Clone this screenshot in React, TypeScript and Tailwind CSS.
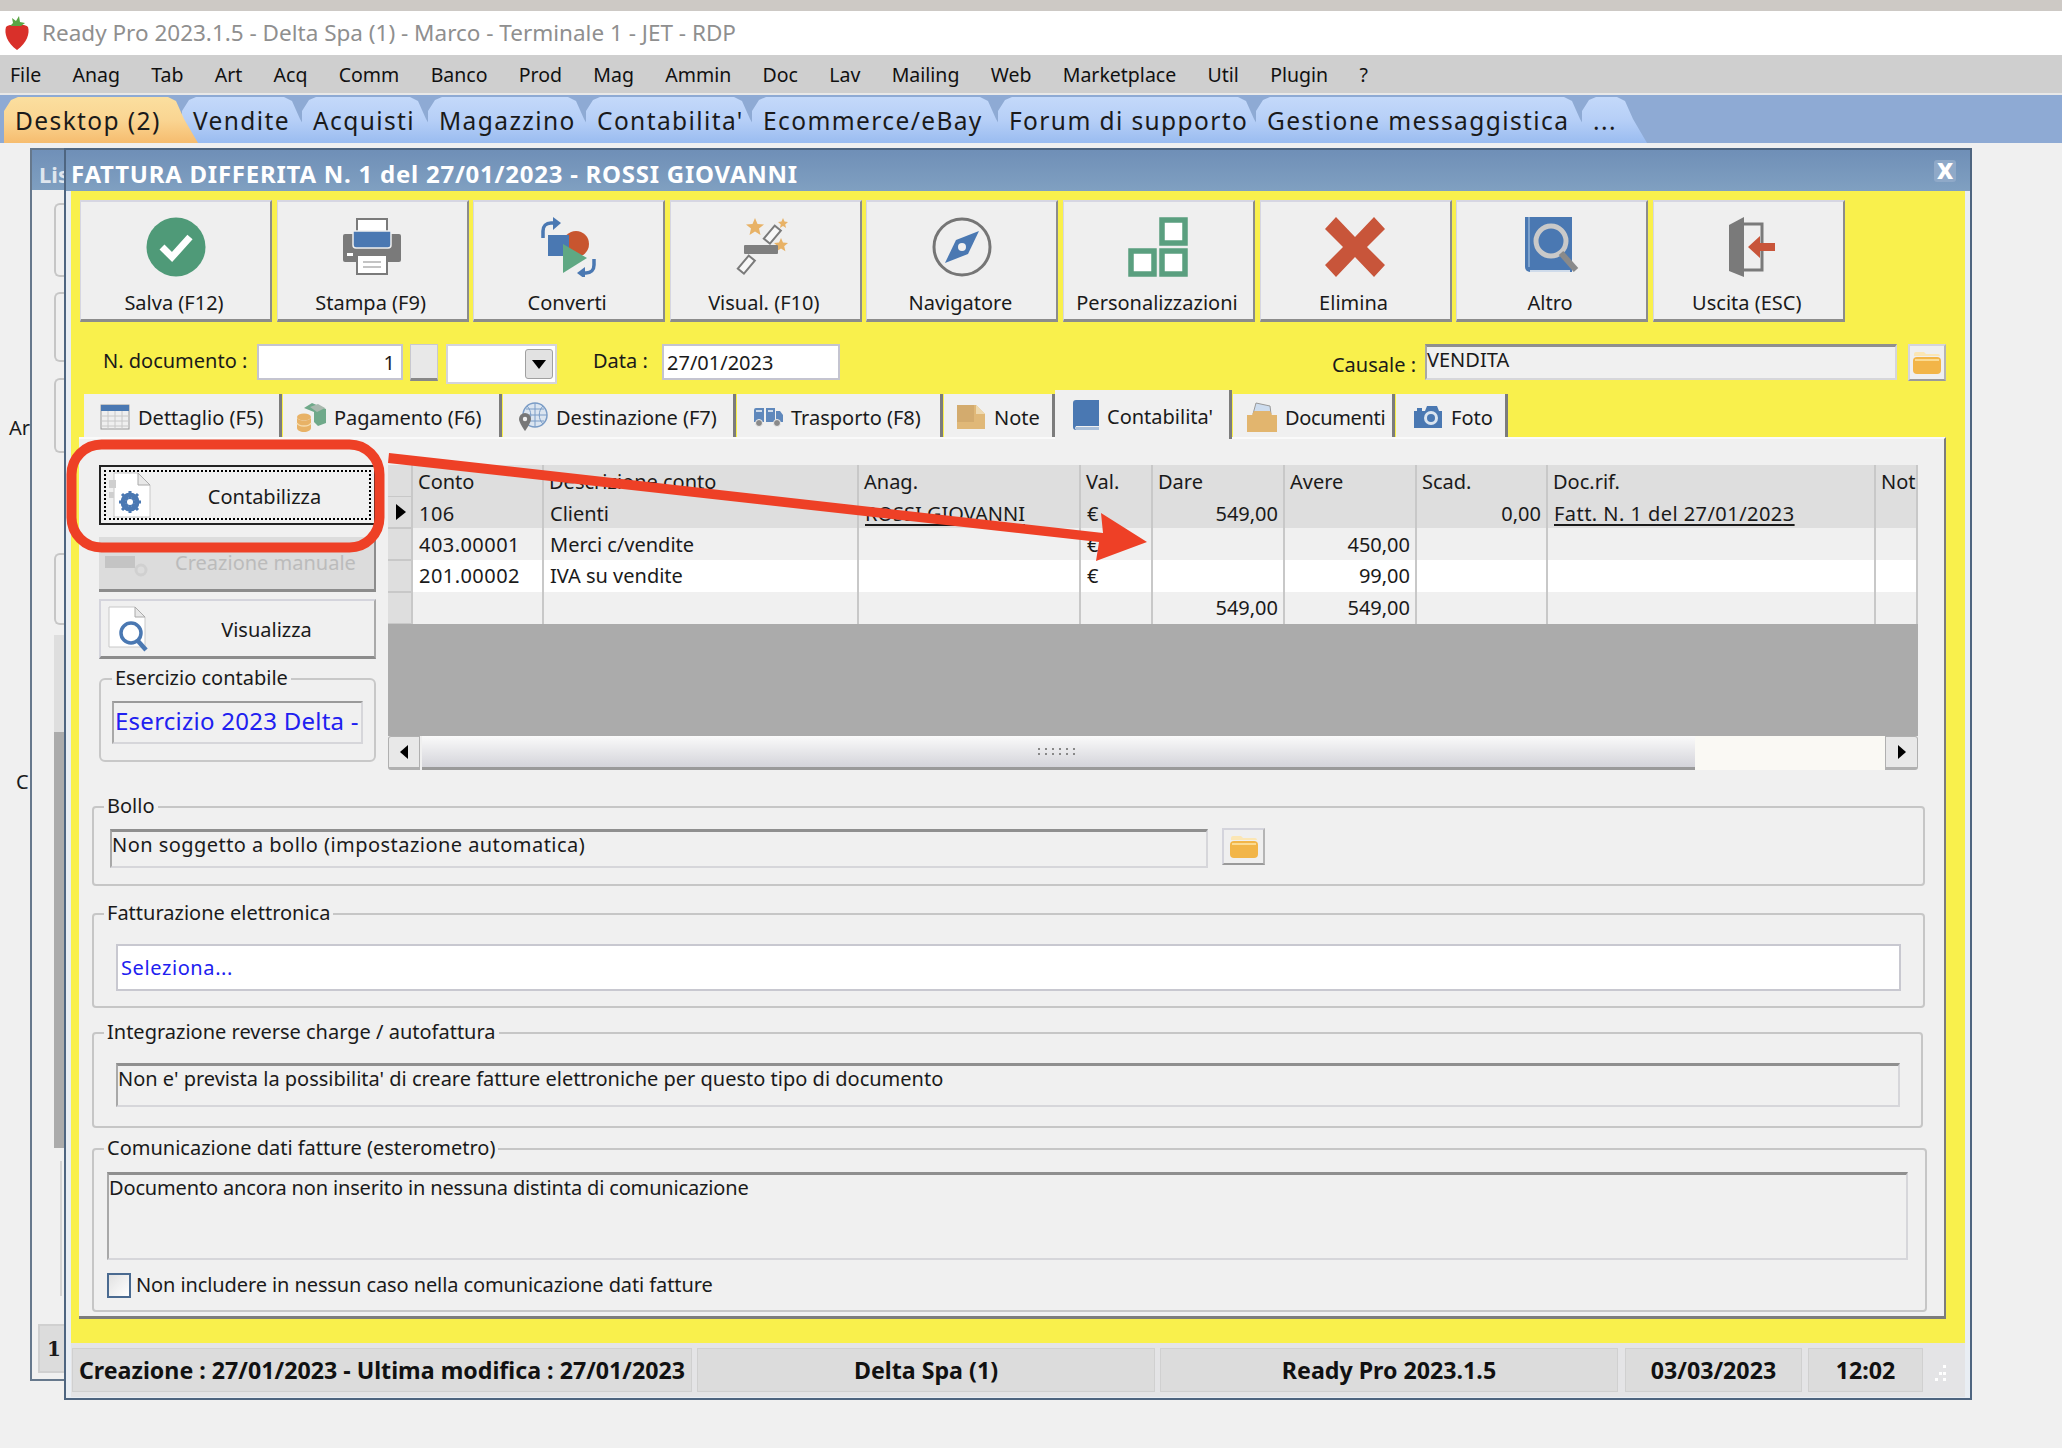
import React from 'react';

const topTabs = [
  { label: 'Desktop (2)', cls: 'w-[194px]', active: true },
  { label: 'Vendite', cls: 'w-[132px] -ml-[16px]' },
  { label: 'Acquisti', cls: 'w-[138px] -ml-[12px]' },
  { label: 'Magazzino', cls: 'w-[170px] -ml-[12px]' },
  { label: "Contabilita'", cls: 'w-[178px] -ml-[12px]' },
  { label: 'Ecommerce/eBay', cls: 'w-[258px] -ml-[12px]' },
  { label: 'Forum di supporto', cls: 'w-[270px] -ml-[12px]' },
  { label: 'Gestione messaggistica', cls: 'w-[338px] -ml-[12px]' },
  { label: '...', cls: 'w-[65px] -ml-[12px]' },
];

const menu = ['File', 'Anag', 'Tab', 'Art', 'Acq', 'Comm', 'Banco', 'Prod', 'Mag', 'Ammin', 'Doc', 'Lav', 'Mailing', 'Web', 'Marketplace', 'Util', 'Plugin', '?'];

/* ---------- toolbar icons ---------- */
const CheckIcon = () => (
  <svg width="60" height="60" viewBox="0 0 60 60">
    <circle cx="30" cy="30" r="29.5" fill="#4f9a78" />
    <path d="M16 30l10 10 18-20" fill="none" stroke="#fff" strokeWidth="7" />
  </svg>
);
const PrinterIcon = () => (
  <svg width="60" height="60" viewBox="0 0 60 60">
    <rect x="15" y="2" width="30" height="16" fill="#fff" stroke="#7a7a7a" strokeWidth="2" />
    <path d="M3 17h54a2 2 0 0 1 2 2v24a2 2 0 0 1-2 2H3a2 2 0 0 1-2-2V19a2 2 0 0 1 2-2z" fill="#7a7a7a" />
    <path d="M11 14h38v14a3 3 0 0 1-3 3H14a3 3 0 0 1-3-3z" fill="#4a78b2" stroke="#f0f0f0" strokeWidth="1.5" />
    <rect x="15" y="38" width="30" height="19" fill="#fff" stroke="#7a7a7a" strokeWidth="2" />
    <path d="M21 45h18M21 50h18" stroke="#c4c4c4" strokeWidth="2" />
    <rect x="5" y="36" width="6" height="3" fill="#fff" />
  </svg>
);
const ConvertIcon = () => (
  <svg width="62" height="60" viewBox="0 0 62 60">
    <path d="M5 21v-7c0-5 3-8 8-8h4" fill="none" stroke="#4a78b2" strokeWidth="3.5" />
    <path d="M15 0l8 6-8 7z" fill="#4a78b2" />
    <circle cx="38" cy="27" r="13" fill="#c8552f" />
    <rect x="10" y="18" width="21" height="21" fill="#4a78b2" />
    <path d="M25 27l24 14-24 15z" fill="#5fa883" />
    <path d="M56 42v6c0 5-3 8-8 8h-3" fill="none" stroke="#4a78b2" strokeWidth="3.5" />
    <path d="M47 50l-8 6 8 6z" fill="#4a78b2" />
  </svg>
);
const WandIcon = () => (
  <svg width="60" height="60" viewBox="0 0 60 60">
    <path d="M20 1l2.500 6 6.500.5-5 4 1.500 6.500-5.500-3.500-5.500 3.500 1.500-6.500-5-4 6.500-.5z" fill="#e8b266" />
    <path d="M48 1l1.500 3.500 3.500.5-2.800 2.400.9 3.600-3.100-2-3.100 2 .9-3.600L43 5l3.500-.5z" fill="#e8b266" />
    <path d="M46 21l2 4.500 5 .5-3.800 3.200 1.200 5-4.400-2.700-4.400 2.700 1.200-5L39 26l5-.5z" fill="#e8b266" />
    <rect x="29" y="14" width="17" height="8" transform="rotate(-50 37 18)" fill="#f7f7f7" stroke="#7a7a7a" strokeWidth="2" />
    <rect x="9" y="28" width="34" height="9" rx="1" fill="#7f7f7f" />
    <rect x="3" y="44" width="17" height="8" transform="rotate(-50 11 48)" fill="#f7f7f7" stroke="#7a7a7a" strokeWidth="2" />
  </svg>
);
const CompassIcon = () => (
  <svg width="60" height="60" viewBox="0 0 60 60">
    <circle cx="30" cy="30" r="28" fill="none" stroke="#757575" strokeWidth="3" />
    <path d="M47 14L36 37 13 46l11-23z" fill="#4a78b2" />
    <circle cx="30" cy="30" r="4" fill="#f0f0f0" />
  </svg>
);
const BlocksIcon = () => (
  <svg width="60" height="60" viewBox="0 0 60 60">
    <g fill="#fff" stroke="#5a9f7f" strokeWidth="5.5">
      <rect x="34" y="3" width="23" height="23" />
      <rect x="3" y="34" width="23" height="23" />
      <rect x="34" y="34" width="23" height="23" />
    </g>
  </svg>
);
const CrossIcon = () => (
  <svg width="60" height="60" viewBox="0 0 60 60">
    <path d="M11 0l19 20L49 0l11 12-18 18 18 18-11 12-19-20-19 20L0 48l18-18L0 12z" fill="#c8553a" />
  </svg>
);
const BookSearchIcon = () => (
  <svg width="60" height="60" viewBox="0 0 60 60">
    <path d="M3 0h47v55H8a5 5 0 0 1-5-5z" fill="#4a78b2" />
    <path d="M7 0v50" stroke="#8fb0d6" strokeWidth="1.5" />
    <circle cx="29" cy="24" r="15" fill="#4a78b2" stroke="#c9c9c9" strokeWidth="5" />
    <path d="M39 36l15 17" stroke="#8a8a8a" strokeWidth="6" />
    <path d="M8 54h40" stroke="#cfdbea" strokeWidth="2" />
  </svg>
);
const ExitIcon = () => (
  <svg width="60" height="60" viewBox="0 0 60 60">
    <path d="M22 7h22v46H22" fill="none" stroke="#7a7a7a" strokeWidth="3" />
    <path d="M11 8L26 0v60L11 54z" fill="#7a7a7a" />
    <path d="M30 30l12-11v7h15v8H42v7z" fill="#c8553a" />
  </svg>
);

const toolbar = [
  { label: 'Salva (F12)', icon: <CheckIcon /> },
  { label: 'Stampa (F9)', icon: <PrinterIcon /> },
  { label: 'Converti', icon: <ConvertIcon /> },
  { label: 'Visual. (F10)', icon: <WandIcon /> },
  { label: 'Navigatore', icon: <CompassIcon /> },
  { label: 'Personalizzazioni', icon: <BlocksIcon /> },
  { label: 'Elimina', icon: <CrossIcon /> },
  { label: 'Altro', icon: <BookSearchIcon /> },
  { label: 'Uscita (ESC)', icon: <ExitIcon /> },
];

/* ---------- document tab icons ---------- */
const TableIcon = () => (
  <svg width="30" height="26" viewBox="0 0 30 26">
    <rect x="1" y="1" width="28" height="24" fill="#efefef" stroke="#9a9a9a" />
    <rect x="1" y="1" width="28" height="6" fill="#4a78b2" />
    <path d="M1 12h28M1 17h28M1 22h28M8 7v18M15 7v18M22 7v18" stroke="#c8c8c8" />
  </svg>
);
const MoneyIcon = () => (
  <svg width="30" height="30" viewBox="0 0 30 30">
    <path d="M8 6l8-5 14 6v14l-8 3-4-4V10z" fill="#6fa98a" />
    <path d="M14 5l8-3 7 4-8 4z" fill="#a8b8ae" />
    <ellipse cx="8" cy="15" rx="7" ry="3.5" fill="#e8b266" />
    <path d="M1 15v11c0 2 3 4 7 4s7-2 7-4V15c0 2-3 3.500-7 3.500S1 17 1 15z" fill="#e8b266" />
    <path d="M1 21c1 2 4 3 7 3s6-1 7-3" fill="none" stroke="#f5dcae" strokeWidth="1.5" />
  </svg>
);
const GlobeIcon = () => (
  <svg width="30" height="30" viewBox="0 0 30 30">
    <circle cx="17" cy="13" r="12" fill="#dbe5f0" stroke="#7a9cc6" strokeWidth="1.5" />
    <path d="M5 13h24M17 1v24M9 4c5 5 5 13 0 18M25 4c-5 5-5 13 0 18M8 7h18M8 19h18" fill="none" stroke="#7a9cc6" />
    <path d="M7 11a6 6 0 0 1 6 6c0 4-6 12-6 12S1 21 1 17a6 6 0 0 1 6-6z" fill="#777" />
    <circle cx="7" cy="17" r="2.2" fill="#efefef" />
  </svg>
);
const TruckIcon = () => (
  <svg width="30" height="20" viewBox="0 0 30 20">
    <path d="M1 3a2 2 0 0 1 2-2h8v14H1zM13 1h9v14h-9zM23 4h4l3 4v7h-7z" fill="#5f88bc" />
    <path d="M3 4h6M15 4h5" stroke="#cfdbea" strokeWidth="2" />
    <circle cx="6" cy="16" r="3.5" fill="#8a8a8a" stroke="#efefef" />
    <circle cx="24" cy="16" r="3.5" fill="#8a8a8a" stroke="#efefef" />
  </svg>
);
const NoteIcon = () => (
  <svg width="30" height="26" viewBox="0 0 30 26">
    <path d="M1 1h19l9 9v15H1z" fill="#e0b878" />
    <path d="M1 1h17v17H1z" fill="#c9a066" opacity=".55" />
    <path d="M20 1l9 9h-9z" fill="#eed9b0" />
  </svg>
);
const BookIcon = () => (
  <svg width="26" height="30" viewBox="0 0 26 30">
    <path d="M3 0h23v26H3a3 3 0 0 0 0 4 3 3 0 0 1-3-3V3a3 3 0 0 1 3-3z" fill="#4a78b2" />
    <path d="M3 27h23v3H3z" fill="#aac0da" />
  </svg>
);
const FolderIcon = () => (
  <svg width="30" height="30" viewBox="0 0 30 30">
    <path d="M6 12L9 1l14 3 1 8z" fill="#cddcee" stroke="#999" />
    <path d="M0 13h5l2-4 16 0 2 4h5v17H0z" fill="#e2b56e" />
  </svg>
);
const CameraIcon = () => (
  <svg width="30" height="24" viewBox="0 0 30 24">
    <path d="M1 6h3V3h5v3h3l2-5h10l2 5h3v17H1z" fill="#4a78b2" />
    <circle cx="18" cy="13" r="7" fill="#dbe5f0" />
    <circle cx="18" cy="13" r="4" fill="#4a78b2" />
  </svg>
);

const docTabs = [
  { label: 'Dettaglio (F5)', icon: <TableIcon />, cls: 'w-[198px] pl-[16px]' },
  { label: 'Pagamento (F6)', icon: <MoneyIcon />, cls: 'w-[219px] pl-[13px] ml-[1px]' },
  { label: 'Destinazione (F7)', icon: <GlobeIcon />, cls: 'w-[233px] pl-[15px] ml-[1px]' },
  { label: 'Trasporto (F8)', icon: <TruckIcon />, cls: 'w-[206px] pl-[16px] ml-[1px]' },
  { label: 'Note', icon: <NoteIcon />, cls: 'w-[111px] pl-[12px] ml-[1px]' },
  { label: "Contabilita'", icon: <BookIcon />, cls: 'w-[177px] pl-[18px]', active: true },
  { label: 'Documenti', icon: <FolderIcon />, cls: 'w-[162px] pl-[14px] ml-[1px] tracking-[-0.35px]' },
  { label: 'Foto', icon: <CameraIcon />, cls: 'w-[112px] pl-[17px] ml-[1px]' },
];

const FolderBtn = ({ cls }: { cls: string }) => (
  <div className={`flex h-[37px] w-[38px] items-center justify-center border-2 border-[#d4d4dc] border-b-[#9a9a9a] border-r-[#b5b5b5] bg-[#efefef] ${cls}`}>
    <svg width="30" height="24" viewBox="0 0 30 24">
      <path d="M2 5V3a2 2 0 0 1 2-2h8l2 2h12a2 2 0 0 1 2 2z" fill="#fbe6b4" />
      <rect x="1" y="6" width="28" height="17" rx="4" fill="#f2b548" />
      <path d="M3 9h24" stroke="#fbdb92" strokeWidth="2" />
    </svg>
  </div>
);

const DocGearIcon = () => (
  <svg width="44" height="46" viewBox="0 0 44 46">
    <path d="M6 1h24l12 12v32H6z" fill="#fff" stroke="#c8c8c8" />
    <path d="M30 1v12h12z" fill="#e8e8e8" stroke="#aaa" />
    <circle cx="22" cy="30" r="7" fill="none" stroke="#4a78b2" strokeWidth="5" />
    <path d="M22 19v22M11 30h22M14 22l16 16M30 22L14 38" stroke="#4a78b2" strokeWidth="3" />
    <circle cx="22" cy="30" r="3" fill="#fff" />
    <path d="M1 8h7v8H1zM1 20h5v6H1z" fill="#cfcfcf" />
  </svg>
);
const DocSearchIcon = () => (
  <svg width="44" height="46" viewBox="0 0 44 46">
    <path d="M2 1h26l10 10v30H2z" fill="#fff" stroke="#c8c8c8" />
    <path d="M28 1v10h10z" fill="#e8e8e8" stroke="#aaa" />
    <circle cx="24" cy="27" r="10" fill="#fff" stroke="#4a78b2" strokeWidth="3.5" />
    <path d="M31 35l8 9" stroke="#4a78b2" strokeWidth="4.5" />
  </svg>
);
const DisabledIcon = () => (
  <svg width="44" height="30" viewBox="0 0 44 30">
    <rect x="0" y="8" width="30" height="12" fill="#c4c4c4" />
    <circle cx="36" cy="22" r="5" fill="none" stroke="#d0d0d0" strokeWidth="3" />
  </svg>
);

/* ---------- grid ---------- */
const gridCols = 'grid grid-cols-[25px_131px_315px_222px_72px_132px_132px_131px_328px_42px]';
const header = ['Conto', 'Descrizione conto', 'Anag.', 'Val.', 'Dare', 'Avere', 'Scad.', 'Doc.rif.', 'Not'];
const rows = [
  { cells: ['106', 'Clienti', 'ROSSI GIOVANNI', '€', '549,00', '', '0,00', 'Fatt. N. 1 del 27/01/2023', ''], bg: 'bg-[#dedede] leading-[35px]' },
  { cells: ['403.00001', 'Merci c/vendite', '', '€', '', '450,00', '', '', ''], bg: 'bg-[#f0f0f0] leading-[33px]' },
  { cells: ['201.00002', 'IVA su vendite', '', '€', '', '99,00', '', '', ''], bg: 'bg-white leading-[32px]' },
  { cells: ['', '', '', '', '549,00', '549,00', '', '', ''], bg: 'bg-[#f0f0f0] leading-[32px]' },
];

const SideButton = ({ label, icon, cls, inner }: { label: string; icon: React.ReactNode; cls: string; inner?: string }) => (
  <div className={`flex h-[60px] w-[277px] items-center ${cls}`}>
    <div className={`flex h-full w-full items-center pl-[6px] ${inner || ''}`}>
      <span className="w-[44px]">{icon}</span>
      <span className="flex-1 pl-[8px] pt-[3px] text-center">{label}</span>
    </div>
  </div>
);

const Fieldset = ({ label, cls, children }: { label: string; cls: string; children: React.ReactNode }) => (
  <div className={`ml-[13px] rounded-[4px] border-2 border-[#c6c6c6] ${cls}`}>
    <div className="ml-[10px] -mt-[15px] h-[28px] w-fit bg-[#f0f0f0] px-[3px] leading-[26px]">{label}</div>
    {children}
  </div>
);

const ReadOnlyField = ({ cls, children }: { cls: string; children?: React.ReactNode }) => (
  <div className={`border-2 border-[#d6d6da] border-t-[3px] border-t-[#8f8f8f] border-l-[#a8a8a8] bg-[#f0f0f0] leading-[26px] ${cls}`}>{children}</div>
);

export default function App() {
  return (
    <div className="relative h-[1448px] w-[2062px] overflow-hidden bg-[#f0f0f0] font-['Noto_Sans',sans-serif] text-[20px] text-[#1a1a1a]">
      <div className="h-[11px] bg-[#cdc9c5]" />
      <div className="flex h-[44px] items-center bg-white">
        <svg className="ml-[3px]" width="28" height="34" viewBox="0 0 28 34">
          <path d="M3 11c3-3 8-2 11-1 3-1 8-2 11 1 2 6-1 16-11 23C4 27 1 17 3 11z" fill="#d9302a" />
          <path d="M7 10l3-3-1-5 4 3 3-5 1 6 5 1-4 3z" fill="#5aa544" />
        </svg>
        <span className="ml-[11px] text-[22.5px] text-[#8f8f8f]">Ready Pro 2023.1.5 - Delta Spa (1) - Marco - Terminale 1 - JET - RDP</span>
      </div>
      <div className="flex h-[38px] items-center gap-[31.3px] bg-[#cfcfcf] pl-[10px] pt-[2px] text-[19.5px] text-[#111]">
        {menu.map((m) => (
          <span key={m}>{m}</span>
        ))}
      </div>
      <div className="flex h-[50px] items-end border-t-2 border-[#e8e8e8] bg-[#8eaad4] pl-[4px]">
        {topTabs.map((t) => (
          <div
            key={t.label}
            className={`flex h-[46px] shrink-0 items-center pl-[11px] pt-[2px] text-[24.5px] tracking-[1.4px] [clip-path:polygon(0_100%,0_14px,7px_3px,14px_0,calc(100%-30px)_0,calc(100%-22px)_4px,calc(100%-14px)_22px,100%_100%)] ${t.cls} ${t.active ? 'z-10 bg-gradient-to-b from-[#fbdf9f] via-[#fad592] to-[#f6bc6e]' : 'bg-gradient-to-b from-[#c4d9fa] via-[#b6cff7] to-[#9abcf0]'}`}
          >
            {t.label}
          </div>
        ))}
      </div>

      {/* Finestra dietro */}
      <div className="absolute left-[30px] top-[148px] h-[1233px] w-[40px] border-2 border-[#66788c]">
        <div className="h-[40px] bg-gradient-to-b from-[#7090b8] to-[#7f9fc0] pl-[7px] text-[22px] font-bold leading-[48px] text-[#dfe6ee]">Lis</div>
        <div className="flex flex-col items-start pl-[22px]">
          <div className="mt-[13px] h-[74px] w-[12px] rounded-l-[6px] border-2 border-r-0 border-[#c6c6c6]" />
          <div className="mt-[15px] h-[70px] w-[12px] rounded-l-[6px] border-2 border-r-0 border-[#c6c6c6]" />
          <div className="mt-[16px] h-[75px] w-[12px] rounded-l-[6px] border-2 border-r-0 border-[#c6c6c6]" />
          <div className="mt-[100px] h-[72px] w-[12px] rounded-l-[6px] border-2 border-r-0 border-[#c6c6c6]" />
          <div className="mt-[10px] h-[97px] w-[12px] bg-[#dedede]" />
          <div className="h-[416px] w-[12px] bg-[#ababab]" />
          <div className="ml-[6px] mt-[13px] h-[135px] w-[6px] border-l-2 border-[#d4d4d4]" />
          <div className="-ml-[16px] mt-[28px] flex h-[49px] w-[34px] items-center border-2 border-[#d0d0d0] bg-[#dcdcdc] pl-[7px] font-['DejaVu_Serif',serif] text-[20px] font-bold">1</div>
        </div>
      </div>
      <span className="absolute left-[9px] top-[413px] text-[20px]">Ar</span>
      <span className="absolute left-[16px] top-[767px] text-[20px]">C</span>

      {/* Finestra fattura */}
      <div className="absolute left-[64px] top-[148px] flex h-[1252px] w-[1908px] flex-col border-2 border-[#4e6580] bg-[#e9eef4] px-[5px]">
        <div className="-mx-[5px] flex h-[41px] shrink-0 items-center justify-between bg-gradient-to-b from-[#6f8fb7] to-[#80a0c1] pl-[5px] pr-[14px] pt-[7px] text-[24px] font-bold text-white">
          <span className="tracking-[0.75px]">FATTURA DIFFERITA N. 1 del 27/01/2023 - ROSSI GIOVANNI</span>
          <span className="-mt-[7px] flex h-[22px] w-[22px] items-center justify-center rounded-[3px] bg-[#8fa9c8] pb-[5px] text-[28px] leading-none">x</span>
        </div>

        <div className="flex h-[1152px] shrink-0 flex-col bg-[#f9f04c]">
          <div className="ml-[9px] mt-[9px] flex gap-[4.6px]">
            {toolbar.map((b) => (
              <div key={b.label} className="flex h-[122px] w-[192px] flex-col items-center border-b-[3px] border-l border-r-2 border-t-2 border-[#d6d6e2] border-b-[#8c8c8c] border-r-[#8c8c8c] bg-[#efefef] pt-[15px]">
                <div className="flex h-[60px] items-center">{b.icon}</div>
                <div className="mt-[12px] pr-[3px] leading-[28px]">{b.label}</div>
              </div>
            ))}
          </div>

          <div className="mt-[22px] flex h-[40px] pl-[32px] pr-[19px]">
            <div className="w-[154px] leading-[34px]">N. documento :</div>
            <div className="h-[36px] w-[146px] border-2 border-[#c4c4d0] bg-white pr-[6px] text-right leading-[34px]">1</div>
            <div className="ml-[7px] h-[37px] w-[28px] border border-b-[3px] border-[#c8c8d0] border-b-[#888] bg-[#e8e8e8]" />
            <div className="ml-[8px] flex h-[40px] w-[111px] items-center justify-end border-2 border-[#d4d4dc] bg-white pr-[2px]">
              <div className="flex h-[30px] w-[28px] items-center justify-center rounded-[3px] border border-[#a0a0a0] bg-[#e2e2e2]">
                <div className="h-0 w-0 border-x-[7px] border-t-[9px] border-x-transparent border-t-black" />
              </div>
            </div>
            <div className="ml-[36px] w-[69px] leading-[34px]">Data :</div>
            <div className="h-[36px] w-[178px] border-2 border-[#c4c4d0] bg-white pl-[3px] leading-[34px]">27/01/2023</div>
            <div className="ml-auto mr-[9px] mt-[4px] leading-[34px]">Causale :</div>
            <ReadOnlyField cls="h-[36px] w-[472px] pl-[0px]">VENDITA</ReadOnlyField>
            <FolderBtn cls="ml-[11px]" />
          </div>

          <div className="ml-[13px] mt-[6px] flex h-[47px] items-end">
            {docTabs.map((t) => (
              <div
                key={t.label}
                className={`flex shrink-0 items-center gap-[8px] border-r-[3px] border-[#7c7c7c] bg-[#f0f0f0] ${t.cls} ${t.active ? 'z-10 -mb-[2px] h-[49px]' : 'h-[43px] pt-[3px]'}`}
              >
                {t.icon}
                <span className={t.active ? 'pt-[4px]' : 'pt-[1px]'}>{t.label}</span>
              </div>
            ))}
          </div>

          {/* Pannello */}
          <div className="ml-[8px] flex h-[882px] w-[1867px] flex-col border-b-[3px] border-r-[2px] border-t-2 border-[#7c7c7c] border-t-[#fafafa] bg-[#f0f0f0]">
            <div className="ml-[20px] mt-[26px] flex gap-[12px]">
              <div className="flex w-[277px] flex-col">
                <SideButton
                  label="Contabilizza"
                  icon={<DocGearIcon />}
                  cls="border-2 border-[#222] bg-[#f0f0f0] p-[3px]"
                  inner="border-2 border-dotted border-black !pl-[2px]"
                />
                <div className="mt-[12px] flex h-[55px] w-[277px] items-center border-b-[3px] border-r-2 border-[#8c8c8c] bg-[#dcdcdc] pl-[6px] text-[#bbb]">
                  <span className="w-[44px]"><DisabledIcon /></span>
                  <span className="flex-1 pl-[8px] text-center">Creazione manuale</span>
                </div>
                <SideButton
                  label="Visualizza"
                  icon={<DocSearchIcon />}
                  cls="mt-[7px] border-2 border-[#d4d4dc] border-b-[3px] border-b-[#8c8c8c] border-r-[#aaa] bg-[#f0f0f0]"
                />
                <div className="mt-[19px] h-[84px] w-[277px] rounded-[6px] border-2 border-[#c8c8c8]">
                  <div className="ml-[11px] -mt-[15px] h-[28px] w-fit bg-[#f0f0f0] px-[3px] leading-[26px]">Esercizio contabile</div>
                  <ReadOnlyField cls="ml-[11px] mt-[8px] h-[43px] w-[251px] !border-t-2 !border-t-[#9a9a9a] pl-[1px] text-[24px] !leading-[36px] tracking-[0.25px] text-[#2020f0]">Esercizio 2023 Delta -</ReadOnlyField>
                </div>
              </div>

              <div className="w-[1530px]">
                <div className={`${gridCols} h-[31px] bg-[#dedede]`}>
                  <div className="border-r-2 border-[#c8c8c8]" />
                  {header.map((h) => (
                    <div key={h} className="overflow-hidden whitespace-nowrap border-r-2 border-[#c8c8c8] pl-[5px] leading-[33px]">{h}</div>
                  ))}
                </div>
                {rows.map((r, i) => (
                  <div key={i} className={`${gridCols} h-[32px]`}>
                    <div className="flex items-center border-b border-t border-r-2 border-[#c8c8c8] bg-[#dedede] pl-[8px]">
                      {i === 0 && <div className="h-0 w-0 border-y-[8px] border-l-[10px] border-y-transparent border-l-black" />}
                    </div>
                    {r.cells.map((c, j) => {
                      const right = j === 4 || j === 5 || j === 6;
                      const link = i === 0 && (j === 2 || j === 7);
                      return (
                        <div key={j} className={`overflow-hidden whitespace-nowrap border-r-2 border-[#c8c8c8] ${r.bg} ${right ? 'pr-[5px] text-right' : 'pl-[6px]'} ${j === 0 || j === 7 ? 'tracking-[0.45px]' : ''}`}>
                          <span className={link ? 'underline decoration-[2px] underline-offset-[3px]' : ''}>{c}</span>
                        </div>
                      );
                    })}
                  </div>
                ))}
                <div className="h-[112px] bg-[#ababab]" />
                <div className="flex h-[34px]">
                  <div className="flex w-[32px] items-center justify-center rounded-l-[3px] border border-b-[3px] border-[#b0b0b0] bg-[#e8e8e8]">
                    <div className="h-0 w-0 border-y-[7px] border-r-[8px] border-y-transparent border-r-black" />
                  </div>
                  <div className="ml-[2px] flex w-[1273px] flex-col items-center justify-center gap-[3px] border-b-[3px] border-[#9a9a9a] bg-gradient-to-b from-[#fafafa] to-[#d4d4da]">
                    <div className="h-[2px] w-[42px] bg-[repeating-linear-gradient(90deg,#888_0,#888_2px,transparent_2px,transparent_7px)]" />
                    <div className="h-[2px] w-[42px] bg-[repeating-linear-gradient(90deg,#888_0,#888_2px,transparent_2px,transparent_7px)]" />
                  </div>
                  <div className="w-[190px] bg-[#faf9f4]" />
                  <div className="flex w-[33px] items-center justify-center rounded-r-[3px] border border-b-[3px] border-[#b0b0b0] bg-[#e8e8e8]">
                    <div className="h-0 w-0 border-y-[7px] border-l-[8px] border-y-transparent border-l-black" />
                  </div>
                </div>
              </div>
            </div>

            <Fieldset label="Bollo" cls="mt-[36px] h-[80px] w-[1833px]">
              <div className="flex pl-[16px]">
                <ReadOnlyField cls="mt-[8px] h-[39px] w-[1098px] pl-[0px] tracking-[0.45px]">Non soggetto a bollo (impostazione automatica)</ReadOnlyField>
                <FolderBtn cls="ml-[14px] mt-[7px] !w-[43px]" />
              </div>
            </Fieldset>
            <Fieldset label="Fatturazione elettronica" cls="mt-[27px] h-[95px] w-[1833px]">
              <div className="ml-[22px] mt-[16px] h-[47px] w-[1785px] border-2 border-[#c8c8d0] bg-white pl-[3px] leading-[44px] tracking-[0.6px] text-[#2020f0]">Seleziona...</div>
            </Fieldset>
            <Fieldset label="Integrazione reverse charge / autofattura" cls="mt-[24px] h-[96px] w-[1831px]">
              <ReadOnlyField cls="ml-[22px] mt-[16px] h-[44px] w-[1784px] pl-[0px]">Non e&apos; prevista la possibilita&apos; di creare fatture elettroniche per questo tipo di documento</ReadOnlyField>
            </Fieldset>
            <Fieldset label="Comunicazione dati fatture (esterometro)" cls="mt-[20px] h-[164px] w-[1835px]">
              <ReadOnlyField cls="ml-[13px] mt-[9px] h-[88px] w-[1801px] pl-[0px] tracking-[-0.15px]">Documento ancora non inserito in nessuna distinta di comunicazione</ReadOnlyField>
              <div className="ml-[13px] mt-[10px] flex items-center gap-[5px]">
                <div className="h-[25px] w-[24px] border-2 border-[#4a6a90] bg-gradient-to-br from-[#e2e2e2] to-white" />
                <span className="tracking-[-0.1px]">Non includere in nessun caso nella comunicazione dati fatture</span>
              </div>
            </Fieldset>
          </div>
        </div>

        {/* Barra di stato */}
        <div className="flex h-[54px] shrink-0 items-center gap-[5px] bg-[#e4e4e6] pl-[1px] text-[23.2px] font-bold text-[#111]">
          <div className="flex h-[44px] w-[620px] items-center justify-center whitespace-nowrap border border-[#d0d0d0] bg-[#dcdcdc]">Creazione : 27/01/2023 - Ultima modifica : 27/01/2023</div>
          <div className="flex h-[44px] w-[458px] items-center justify-center border border-[#d0d0d0] bg-[#dcdcdc]">Delta Spa (1)</div>
          <div className="flex h-[44px] w-[458px] items-center justify-center border border-[#d0d0d0] bg-[#dcdcdc]">Ready Pro 2023.1.5</div>
          <div className="ml-[2px] flex h-[44px] w-[177px] items-center justify-center border border-[#d0d0d0] bg-[#dcdcdc]">03/03/2023</div>
          <div className="ml-[1px] flex h-[44px] w-[115px] items-center justify-center border border-[#d0d0d0] bg-[#dcdcdc]">12:02</div>
          <svg className="ml-[5px] mt-[6px]" width="14" height="18" viewBox="0 0 14 18">
            <path d="M10 1h3v3h-3zM6 8h3v3H6zM10 8h3v3h-3zM2 14h3v3H2zM10 14h3v3h-3z" fill="#fff" />
          </svg>
        </div>
      </div>

      {/* Annotazione rossa */}
      <svg className="pointer-events-none absolute left-0 top-0" width="2062" height="1448" viewBox="0 0 2062 1448">
        <rect x="71.5" y="444.5" width="308" height="103" rx="30" fill="none" stroke="#ee4026" strokeWidth="10" />
        <path d="M389 453l714 80-2-20 46 29-51 19 3-19L388 463z" fill="#ee4026" />
      </svg>
    </div>
  );
}
